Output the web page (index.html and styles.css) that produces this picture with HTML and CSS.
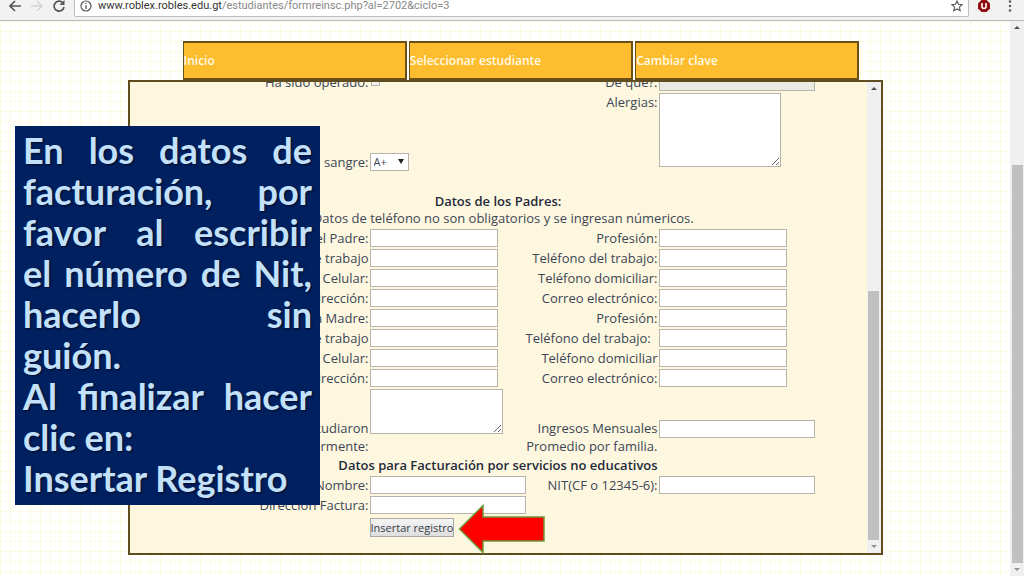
FILE: index.html
```html
<!DOCTYPE html>
<html lang="es">
<head>
<meta charset="utf-8">
<title>Reinscripción</title>
<link rel="stylesheet" href="styles.css">
</head>
<body>
<header class="toolbar">
  <button class="tool" aria-label="Atrás"><svg width="14" height="14" viewBox="0 0 14 14"><path d="M13 6H2M7 1L2 6l5 5" fill="none" stroke="#555" stroke-width="1.700"/></svg></button>
  <button class="tool" aria-label="Adelante"><svg width="14" height="14" viewBox="0 0 14 14"><path d="M1 6h11M7 1l5 5-5 5" fill="none" stroke="#d4d4d4" stroke-width="1.700"/></svg></button>
  <button class="tool" aria-label="Recargar"><svg width="14" height="14" viewBox="0 0 14 14"><path d="M10.800 2.700A5 5 0 1 0 12 7" fill="none" stroke="#555" stroke-width="1.700"/><path d="M12.500 0v5H7.500z" fill="#555"/></svg></button>
  <div class="address">
    <svg width="12" height="12" viewBox="0 0 12 12"><circle cx="6" cy="6" r="5" fill="none" stroke="#555" stroke-width="1.200"/><path d="M6 5.200V9M6 2.800v1.300" stroke="#555" stroke-width="1.300"/></svg>
    <span class="url"><span class="host">www.roblex.robles.edu.gt</span>/estudiantes/formreinsc.php?al=2702&amp;ciclo=3</span>
    <svg width="12" height="12" viewBox="0 0 12 12"><path d="M6 1l1.500 3.300 3.600.4-2.700 2.400.8 3.600L6 8.900l-3.200 1.800.8-3.600L.9 4.700l3.600-.4z" fill="none" stroke="#555" stroke-width="1.100"/></svg>
  </div>
  <button class="tool" aria-label="Extensión"><svg width="14" height="14" viewBox="0 0 14 14"><path d="M4.500 0h5l3.500 3.500v5l-3.500 3.500h-5L1 8.500v-5z" fill="#900c10"/><path d="M5 3v3.500a2 2 0 0 0 4 0V3" fill="none" stroke="#fff" stroke-width="1.600"/></svg></button>
  <button class="tool" aria-label="Menú"><svg width="14" height="14" viewBox="0 0 14 14"><g fill="#555"><circle cx="7" cy="1.500" r="1.200"/><circle cx="7" cy="6" r="1.200"/><circle cx="7" cy="10.500" r="1.200"/></g></svg></button>
</header>
<div class="viewport">
  <main class="page">
    <div class="site">
      <nav class="menu"><a href="#">Inicio</a><a href="#">Seleccionar estudiante</a><a href="#">Cambiar clave</a></nav>
      <section class="panel">
        <form class="form">
          <label class="c1" for="operado">Ha sido operado:</label><input class="check" type="checkbox" id="operado">
          <label class="c3" for="deque">De que?:</label><input class="wide" id="deque" disabled>
          <label class="c3" for="alergias">Alergias:</label><textarea class="allergies" id="alergias"></textarea>
          <label class="c1 bloodlabel" for="sangre">sangre:</label>
          <div class="blood"><select id="sangre"><option>A+</option></select></div>
          <h2 class="full first">Datos de los Padres:</h2>
          <p class="full">* Datos de teléfono no son obligatorios y se ingresan númericos.</p>
          <label class="c1" for="f1">del Padre:</label><input id="f1"><label for="g1">Profesión:</label><input id="g1">
          <label class="c1" for="f2">de trabajo</label><input id="f2"><label for="g2">Teléfono del trabajo:</label><input id="g2">
          <label class="c1" for="f3">Celular:</label><input id="f3"><label for="g3">Teléfono domiciliar:</label><input id="g3">
          <label class="c1" for="f4">Dirección:</label><input id="f4"><label for="g4">Correo electrónico:</label><input id="g4">
          <label class="c1" for="f5">la Madre:</label><input id="f5"><label for="g5">Profesión:</label><input id="g5">
          <label class="c1" for="f6">de trabajo</label><input id="f6"><label for="g6">Teléfono del trabajo:&nbsp;&nbsp;</label><input id="g6">
          <label class="c1" for="f7">Celular:</label><input id="f7"><label for="g7">Teléfono domiciliar</label><input id="g7">
          <label class="c1" for="f8">Dirección:</label><input id="f8"><label for="g8">Correo electrónico:</label><input id="g8">
          <label class="c1 low" for="hijos">estudiaron<br>anteriormente:</label><textarea class="studies" id="hijos"></textarea>
          <label class="low" for="ingresos">Ingresos Mensuales<br>Promedio por familia.</label><input class="wide income" id="ingresos">
          <h2 class="full">Datos para Facturación por servicios no educativos</h2>
          <label class="c1" for="nombre">Nombre:</label><input class="wide" id="nombre"><label for="nit">NIT(CF o 12345-6):</label><input class="wide" id="nit">
          <label class="c1" for="dirf">Dirección Factura:</label><input class="wide" id="dirf">
          <button class="submit" type="button">Insertar registro</button>
        </form>
        <div class="scroll inner"><i class="up"></i><i class="thumb"></i><i class="down"></i></div>
      </section>
    </div>
  </main>
  <div class="scroll outer"><i class="up"></i><i class="thumb"></i><i class="down"></i></div>
</div>
<aside class="callout">
  <span class="spread">En los datos de</span>
  <span class="spread">facturación, por</span>
  <span class="spread">favor al escribir</span>
  <span class="spread">el número de Nit,</span>
  <span class="spread">hacerlo sin</span>
  <span>guión.</span>
  <span class="spread">Al finalizar hacer</span>
  <span>clic en:</span>
  <span>Insertar Registro</span>
</aside>
<svg class="arrow" width="88" height="50" viewBox="0 0 88 50"><path d="M1.500 25L25 1.500V13h61v24H25v11.500z" fill="#f00" stroke="#71953a" stroke-width="1.500"/></svg>
</body>
</html>
```
FILE: styles.css
```css
* { box-sizing: border-box; }
body {
  margin: 0;
  height: 100vh;
  display: flex;
  flex-direction: column;
  overflow: hidden;
  position: relative;
  font-family: "Open Sans", sans-serif;
  font-size: 13px;
  line-height: 20px;
  color: #3c4656;
}
.toolbar {
  height: 21px;
  flex: none;
  display: flex;
  align-items: flex-start;
  padding-left: 8px;
  background: #f2f2f2;
  border-bottom: 1px solid #b9b9b9;
}
.tool {
  border: 0;
  padding: 0;
  margin-right: 8px;
  width: 14px;
  height: 13px;
  background: none;
}
.tool svg { display: block; }
.address {
  flex: 1;
  height: 17px;
  display: flex;
  align-items: flex-start;
  gap: 6px;
  padding: 0 5px;
  margin-right: 8px;
  background: #fff;
  border: 1px solid #bdbdbd;
  border-top: 0;
  border-radius: 0 0 2px 2px;
}
.address svg { flex: none; }
.url { flex: 1; font: 11px/12px Roboto, sans-serif; color: #888; }
.host { color: #333; }
.toolbar .address + .tool { margin-right: 12px; }
.toolbar .tool:last-child { margin-right: 7px; }

.viewport { flex: 1; min-height: 0; display: flex; }
.page {
  flex: 1;
  padding: 20px 0 21px;
  background:
    repeating-linear-gradient(90deg, #fdfae4 0 1px, transparent 1px 10px),
    repeating-linear-gradient(#fdfae4 0 1px, transparent 1px 10px),
    #fffffd;
}
.site {
  width: 75%;
  max-width: 755px;
  height: 100%;
  margin: 0 auto;
  display: flex;
  flex-direction: column;
}
.menu { display: flex; gap: 2px; padding: 0 23px 0 55px; height: 39px; flex: none; }
.menu a {
  flex: 1;
  background: #febd2f;
  border: 2px solid #69501b;
  border-left-width: 1px;
  color: #fffbe6;
  font-size: 12px;
  font-weight: 600;
  line-height: 35px;
  text-decoration: none;
}
.panel {
  flex: 1;
  min-height: 0;
  display: flex;
  border: 2px solid #5f4d20;
  background: #fef7df;
  overflow: hidden;
}
.form {
  flex: 1;
  align-self: flex-end;
  display: grid;
  grid-template-columns: 239px 157px 130px 1fr;
  column-gap: 1px;
  padding-bottom: 16px;
}
.form label { text-align: right; white-space: nowrap; justify-self: end; }
.c1 { grid-column: 1; }
.c3 { grid-column: 3; }
.form input, .form textarea, .form select {
  margin: 1px 0;
  padding: 0 2px;
  border: 1px solid #b9b3ab;
  border-radius: 0;
  background: #fff;
  color: inherit;
  font: inherit;
}
.form input { width: 128px; height: 18px; }
.form .wide { width: 156px; }
.form input:disabled { background: #ebebe4; }
.form .check { appearance: none; width: 9px; height: 9px; margin: 5px 1px; background: #f0f0f0; }
.form .allergies { grid-column: 4; grid-row: 2 / span 2; width: 122px; height: 74px; margin-bottom: 5px; }
.bloodlabel, .blood { grid-row: 3; align-self: end; }
.blood { position: relative; width: 39px; height: 20px; }
.form .blood select { display: block; appearance: none; width: 100%; height: 18px; padding: 0 3px; font-size: 11px; line-height: 16px; }
.blood::after {
  content: "";
  position: absolute;
  right: 5px;
  top: 7px;
  border: 3px solid transparent;
  border-top: 5px solid #222;
  border-bottom: 0;
  pointer-events: none;
}
.full { grid-column: 1 / -1; margin: 0; text-align: center; }
h2.full { font-size: 13px; font-weight: 600; line-height: 20px; color: #1f2a3a; }
h2.first { margin-top: 22px; line-height: 14px; }
.form .studies { width: 133px; height: 45px; margin-bottom: 21px; }
.low { align-self: end; line-height: 18px; }
.form .income { margin-top: 32px; }
.submit {
  grid-column: 2;
  justify-self: start;
  height: 19px;
  margin-top: 3px;
  padding: 0;
  border: 1px solid #a9a9a9;
  background: linear-gradient(#f5f5f5, #dedede);
  font: 11px/16px "Open Sans", sans-serif;
  color: #333b48;
}

.scroll {
  width: 14px;
  flex: none;
  display: flex;
  flex-direction: column;
  align-items: center;
  padding: 5px 0;
  background: #f0f0f0;
}
.scroll .thumb { width: 11px; background: #c0c0c0; margin-top: auto; margin-bottom: 5px; }
.inner .thumb { height: 54%; }
.outer .thumb { height: 73%; }
.up, .down { border: 3px solid transparent; }
.up { border-top: 0; border-bottom-color: #505050; }
.down { border-bottom: 0; border-top-color: #909090; }

.callout {
  position: absolute;
  left: 15px;
  top: 126px;
  width: 305px;
  padding: 4px 8px 6px;
  background: #00205f;
  color: #c3e1fb;
  font: 700 36px/41px Lato, sans-serif;
  text-shadow: 1px 1px 2px #000a28;
}
.callout span { display: block; white-space: nowrap; }
.callout .spread { text-align: justify; text-align-last: justify; white-space: normal; }
.arrow { position: absolute; left: 458px; top: 504px; }
```
